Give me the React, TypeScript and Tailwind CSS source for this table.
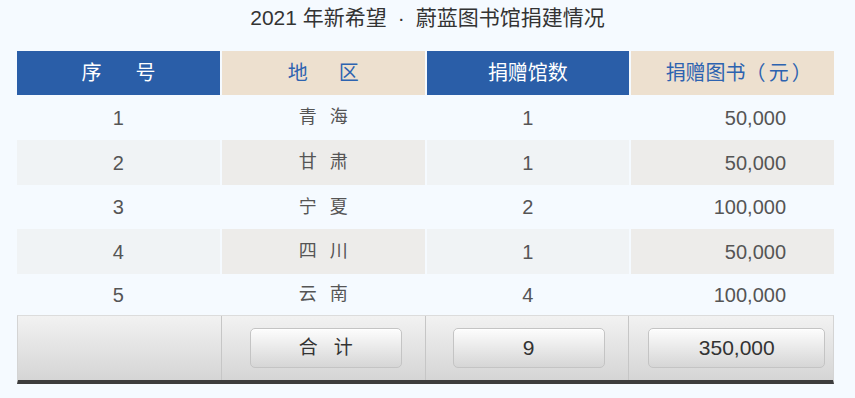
const rows = [
  { id: "1", region: ["青", "海"], count: "1", amount: "50,000" },
  { id: "2", region: ["甘", "肃"], count: "1", amount: "50,000" },
  { id: "3", region: ["宁", "夏"], count: "2", amount: "100,000" },
  { id: "4", region: ["四", "川"], count: "1", amount: "50,000" },
  { id: "5", region: ["云", "南"], count: "4", amount: "100,000" },
];

const rowHeights = ["h-[45px]", "h-[45px]", "h-[44px]", "h-[45px]", "h-[41px]"];

function TotalButton({ children, className }: { children: React.ReactNode; className: string }) {
  return (
    <div
      className={`flex h-[40px] items-center justify-center rounded-[5px] border border-[#c4c4c4] bg-gradient-to-b from-[#fdfdfd] to-[#d6d6d6] text-[#333] shadow-[inset_0_1px_0_#fff] ${className}`}
    >
      {children}
    </div>
  );
}

export default function App() {
  return (
    <div
      className="h-[398px] w-[855px] bg-[#f5faff] pt-[4px]"
      style={{ fontFamily: '"Liberation Sans", "Noto Sans CJK SC", sans-serif' }}
    >
      <h1 className="text-center text-[21px] leading-[28px] text-[#333]">
        2021 年新希望<span className="mx-[11px]">·</span>蔚蓝图书馆捐建情况
      </h1>

      <div className="ml-[17px] mt-[19px] w-[817px]">
        {/* header */}
        <div className="grid h-[44px] grid-cols-4 gap-[2px] text-[20px]">
          <div className="flex items-center justify-center gap-[34px] bg-[#2a5ea8] text-white">
            <span>序</span>
            <span>号</span>
          </div>
          <div className="flex items-center justify-center gap-[31px] bg-[#ede0cf] text-[#2d63b0]">
            <span>地</span>
            <span>区</span>
          </div>
          <div className="flex items-center justify-center bg-[#2a5ea8] text-white">捐赠馆数</div>
          <div className="flex items-center justify-center bg-[#ede0cf] pl-[12px] text-[#2d63b0]">
            捐赠图书（<span className="px-[3px]">元</span>）
          </div>
        </div>

        {/* body */}
        {rows.map((r, i) => {
          const even = i % 2 === 1;
          return (
            <div key={r.id} className={`grid grid-cols-4 gap-[2px] text-[20px] text-[#555] ${rowHeights[i]}`}>
              <div className={`flex items-center justify-center ${even ? "bg-[#f0f3f5]" : ""}`}>{r.id}</div>
              <div className={`flex items-center justify-center gap-[13px] text-[18px] ${even ? "bg-[#edecea]" : ""}`}>
                <span>{r.region[0]}</span>
                <span>{r.region[1]}</span>
              </div>
              <div className={`flex items-center justify-center ${even ? "bg-[#f0f3f5]" : ""}`}>{r.count}</div>
              <div className={`flex items-center justify-end pr-[48px] ${even ? "bg-[#edecea]" : ""}`}>{r.amount}</div>
            </div>
          );
        })}

        {/* totals */}
        <div className="grid h-[69px] grid-cols-4 border-x border-t border-b-[4px] border-x-[#d4d4d4] border-t-[#dcdcdc] border-b-[#3d3d3d] bg-gradient-to-b from-[#f2f2f2] to-[#d5d5d5]">
          <div className="border-r border-[#c6c6c6]" />
          <div className="flex items-center border-r border-[#c6c6c6] pl-[28px]">
            <TotalButton className="w-[152px] gap-[16px] text-[19px]">
              <span>合</span>
              <span>计</span>
            </TotalButton>
          </div>
          <div className="flex items-center border-r border-[#c6c6c6] pl-[27px]">
            <TotalButton className="w-[152px] text-[21px]">9</TotalButton>
          </div>
          <div className="flex items-center pl-[19px]">
            <TotalButton className="w-[177px] text-[21px]">350,000</TotalButton>
          </div>
        </div>
      </div>
    </div>
  );
}
